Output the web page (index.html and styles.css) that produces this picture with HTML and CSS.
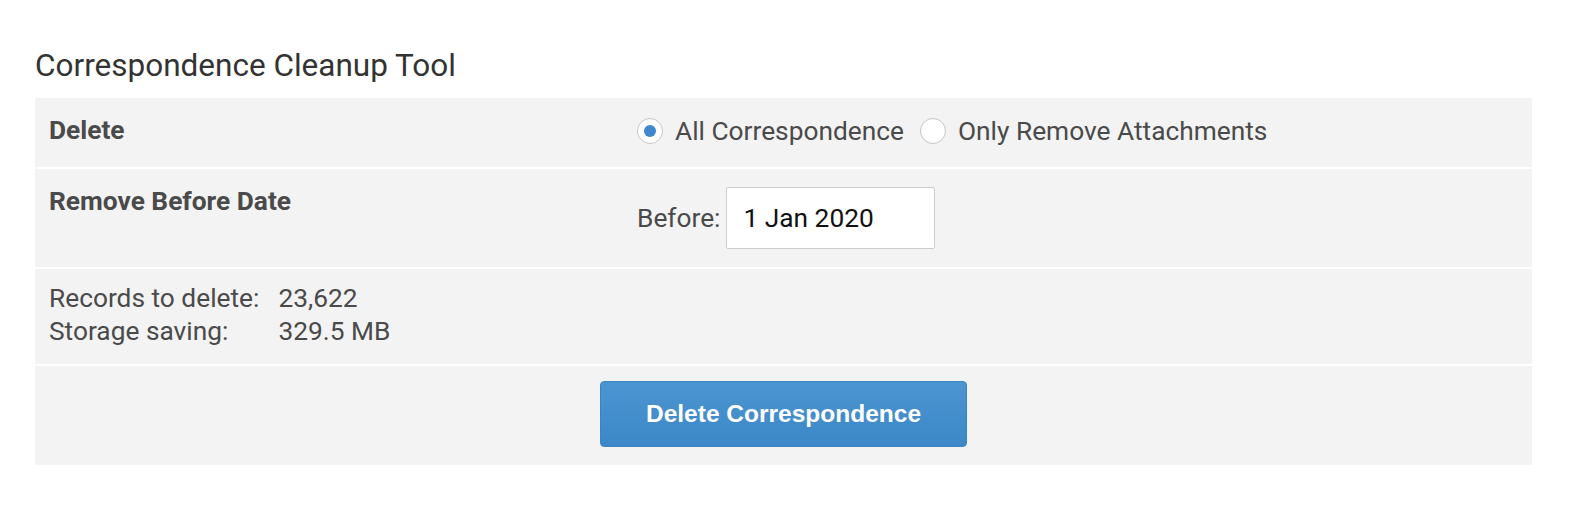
FILE: index.html
```html
<!DOCTYPE html>
<html lang="en">
<head>
<meta charset="utf-8">
<title>Correspondence Cleanup Tool</title>
<link rel="stylesheet" href="styles.css">
</head>
<body>
<div class="page">
  <h1 class="title">Correspondence Cleanup Tool</h1>
  <div class="panel">
    <div class="row row-delete">
      <div class="label">Delete</div>
      <div class="value radios">
        <label class="radio-opt"><span class="radio checked"></span><span class="radio-text">All Correspondence</span></label>
        <label class="radio-opt"><span class="radio"></span><span class="radio-text">Only Remove Attachments</span></label>
      </div>
    </div>
    <div class="row row-date">
      <div class="label">Remove Before Date</div>
      <div class="value date">
        <span class="before">Before:</span>
        <input class="date-input" type="text" value="1 Jan 2020">
      </div>
    </div>
    <div class="row row-stats">
      <div class="stats">
        <span>Records to delete:</span><span>23,622</span>
        <span>Storage saving:</span><span>329.5 MB</span>
      </div>
    </div>
    <div class="row row-action">
      <button class="btn" type="button">Delete Correspondence</button>
    </div>
  </div>
</div>
</body>
</html>
```
FILE: styles.css
```css
* { box-sizing: border-box; }
html, body { margin: 0; padding: 0; background: #fff; }
body {
  font-family: Roboto, "Noto Sans", "Liberation Sans", sans-serif;
  color: #4a4a4a;
}
.page {
  padding: 48px 0 0 35px;
}
.title {
  margin: 0 0 14px;
  font-size: 31.5px;
  line-height: 36px;
  font-weight: 400;
  color: #333;
}
.panel {
  display: flex;
  flex-direction: column;
  gap: 2px;
  width: 1497px;
}
.row {
  background: #f3f3f3;
  display: grid;
  grid-template-columns: 588px 1fr;
  padding: 16px 14px;
  font-size: 26.3px;
  line-height: 33px;
}
.label {
  font-weight: 700;
  color: #4a4a4a;
}
.row-delete { padding-bottom: 19px; }
.radios {
  display: flex;
  align-items: center;
  height: 34px;
  gap: 16px;
}
.radio-opt {
  display: flex;
  align-items: center;
  gap: 12px;
}
.radio {
  width: 26px;
  height: 26px;
  border: 1px solid #c6c6c6;
  border-radius: 50%;
  background: #fff;
  display: flex;
  align-items: center;
  justify-content: center;
}
.radio.checked::after {
  content: "";
  width: 12px;
  height: 12px;
  border-radius: 50%;
  background: #3f88cc;
}
.date {
  display: flex;
  align-items: center;
  gap: 6px;
}
.date-input {
  margin: 2px 0;
  width: 209px;
  height: 62px;
  border: 1px solid #cccccc;
  border-radius: 2px;
  background: #fff;
  padding: 0 0 0 16px;
  font-family: Roboto, "Noto Sans", sans-serif;
  font-size: 26.3px;
  color: #111;
  outline: none;
}
.row-stats {
  display: block;
  padding: 13px 14px 16px;
}
.stats {
  display: grid;
  grid-template-columns: max-content max-content;
  column-gap: 19px;
}
.row-action {
  display: flex;
  justify-content: center;
  padding: 15px 14px 18px;
}
.btn {
  height: 66px;
  padding: 0 45px;
  border: 1px solid #3b84c2;
  border-radius: 4px;
  background: linear-gradient(#4b95d1, #3c87c7);
  color: #fff;
  font-family: "Liberation Sans", Arial, sans-serif;
  font-weight: 700;
  font-size: 24.5px;
  cursor: pointer;
}
```
